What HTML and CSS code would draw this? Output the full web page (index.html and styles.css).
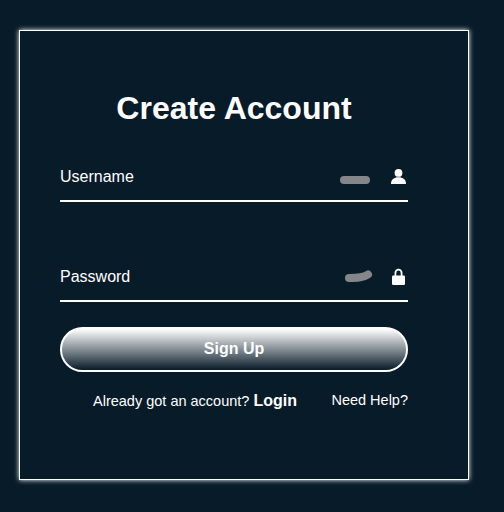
FILE: index.html
```html
<!DOCTYPE html>
<html lang="en">
<head>
<meta charset="utf-8">
<title>Create Account</title>
<link rel="stylesheet" href="styles.css">
</head>
<body>
<main class="card">
  <form class="form">
    <h1 class="title">Create Account</h1>
    <div class="field">
      <label class="label">Username</label>
      <svg class="mark" width="34" height="16" viewBox="0 0 34 16"><path d="M6 8H28"/></svg>
      <svg class="icon" width="18" height="18" viewBox="0 0 18 18"><circle cx="8.500" cy="4.900" r="3.900"/><path d="M1 16C1 11.500 4 9.300 8.500 9.300S16 11.500 16 16Z"/></svg>
    </div>
    <div class="field">
      <label class="label">Password</label>
      <svg class="mark" width="34" height="16" viewBox="0 0 34 16"><path d="M11 6C18 6 25 6 30 2.500"/></svg>
      <svg class="icon" width="18" height="18" viewBox="0 0 18 18"><rect x="2" y="7.500" width="13" height="9.500" rx="1.200"/><path class="shackle" d="M5.400 8V5A3.100 3.300 0 0 1 11.600 5V8"/></svg>
    </div>
    <button class="submit" type="button">Sign Up</button>
    <div class="links">
      <p class="account">Already got an account? <a class="login">Login</a></p>
      <a class="help">Need Help?</a>
    </div>
  </form>
</main>
</body>
</html>
```
FILE: styles.css
```css
* {
  box-sizing: border-box;
  margin: 0;
  padding: 0;
}

body {
  height: 512px;
  overflow: hidden;
  padding: 30px 0 0 19px;
  background: #081b29;
  color: #fff;
  font-family: "Liberation Sans", Arial, sans-serif;
}

.card {
  width: 450px;
  height: 450px;
  border: 1px solid #fff;
  box-shadow: 0 0 5px #fff;
  padding: 59px 60px 0 40px;
}

.title {
  font-size: 32px;
  line-height: 37px;
  text-align: center;
}

.field {
  display: flex;
  align-items: center;
  height: 50px;
  margin-top: 25px;
  padding-top: 2px;
  border-bottom: 2px solid #fff;
  font-size: 16px;
}

.field + .field {
  margin-top: 50px;
}

.label {
  flex: 1;
  line-height: 18px;
}

.mark {
  margin: 6px 18px 0 0;
  overflow: visible;
  fill: none;
  stroke: #848689;
  stroke-width: 8;
  stroke-linecap: round;
}

.icon {
  fill: #fff;
}

.shackle {
  fill: none;
  stroke: #fff;
  stroke-width: 1.8;
}

.submit {
  display: block;
  width: 100%;
  height: 45px;
  margin-top: 25px;
  padding-bottom: 2px;
  border: 2px solid #fff;
  border-radius: 40px;
  background: linear-gradient(#fff, #081b29);
  color: #fff;
  font: 600 16px/18px "Liberation Sans", Arial, sans-serif;
}

.links {
  display: flex;
  justify-content: space-between;
  margin-top: 19px;
  padding-left: 33px;
  font-size: 14.5px;
  line-height: 18px;
}

.account {
  padding-top: 1px;
}

.login {
  font-size: 16px;
  font-weight: 600;
}
```
